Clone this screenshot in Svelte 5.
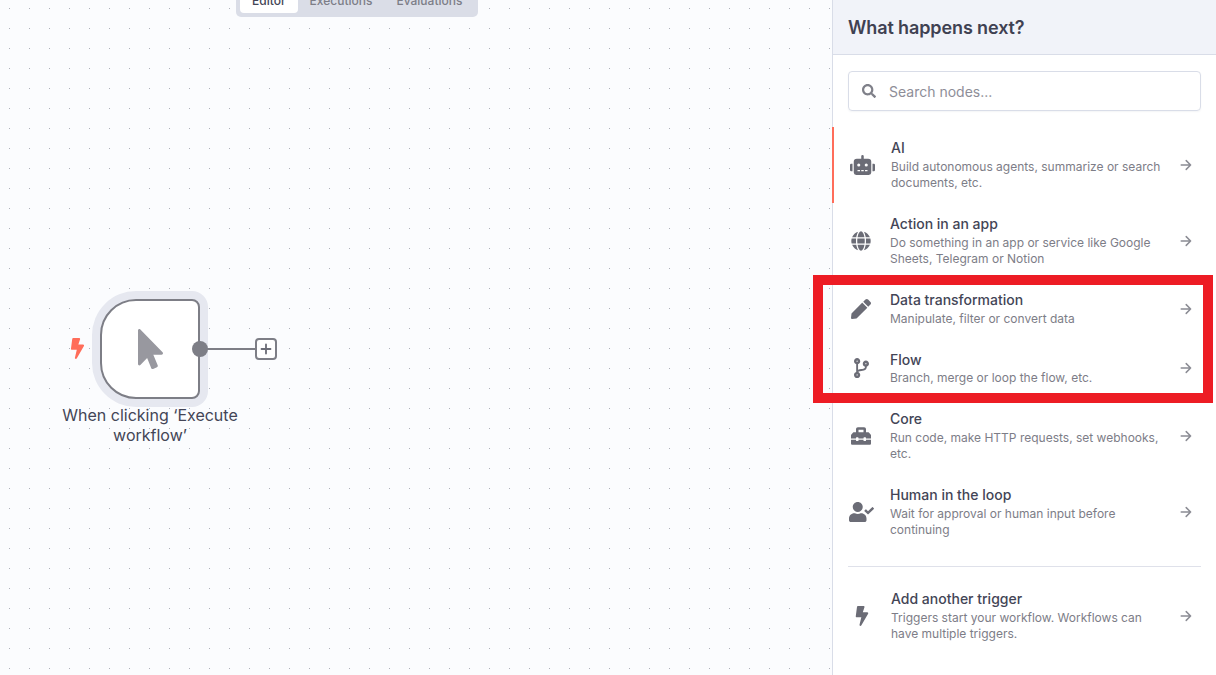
<script>
  const paths = {
    robot: { vb: '0 0 640 512', w: 25, d: 'M32,224H64V416H32A31.96166,31.96166,0,0,1,0,384V256A31.96166,31.96166,0,0,1,32,224Zm512-48V448a64.06328,64.06328,0,0,1-64,64H160a64.06328,64.06328,0,0,1-64-64V176a79.974,79.974,0,0,1,80-80H288V32a32,32,0,0,1,64,0V96H464A79.974,79.974,0,0,1,544,176ZM264,256a40,40,0,1,0-40,40A39.997,39.997,0,0,0,264,256Zm-8,128H192v32h64Zm96,0H288v32h64ZM456,256a40,40,0,1,0-40,40A39.997,39.997,0,0,0,456,256Zm-8,128H384v32h64ZM640,256V384a31.96166,31.96166,0,0,1-32,32H576V224h32A31.96166,31.96166,0,0,1,640,256Z' },
    globe: { vb: '0 0 496 512', w: 20, d: 'M336.5 160C322 70.7 287.8 8 248 8s-74 62.7-88.5 152h177zM152 256c0 22.2 1.2 43.5 3.3 64h185.3c2.1-20.5 3.3-41.8 3.3-64s-1.2-43.5-3.3-64H155.3c-2.1 20.5-3.3 41.8-3.3 64zm324.7-96c-28.6-67.9-86.5-120.4-158-141.6 24.4 33.8 41.2 84.7 50 141.6h108zM177.2 18.4C105.8 39.6 47.8 92.1 19.3 160h108c8.7-56.9 25.5-107.8 49.9-141.6zM487.4 192H372.7c2.1 21 3.3 42.5 3.3 64s-1.2 43-3.3 64h114.6c5.5-20.5 8.6-41.8 8.6-64s-3.1-43.5-8.5-64zM120 256c0-21.5 1.2-43 3.3-64H8.6C3.2 212.5 0 233.8 0 256s3.2 43.5 8.6 64h114.6c-2-21-3.2-42.5-3.2-64zm39.5 96c14.5 89.3 48.7 152 88.5 152s74-62.7 88.5-152h-177zm159.3 141.6c71.4-21.2 129.4-73.7 158-141.6h-108c-8.8 56.9-25.6 107.8-50 141.6zM19.3 352c28.6 67.9 86.5 120.4 158 141.6-24.4-33.8-41.2-84.7-50-141.6h-108z' },
    pen: { vb: '0 0 512 512', w: 20, d: 'M290.74 93.24l128.02 128.02-277.99 277.99-114.14 12.6C11.35 513.54-1.56 500.62.14 485.34l12.7-114.22 277.9-278.88zm207.2-19.06l-60.11-60.11c-18.75-18.75-49.16-18.75-67.91 0l-56.55 56.55 128.02 128.02 56.55-56.55c18.75-18.76 18.75-49.16 0-67.91z' },
    branch: { vb: '0 0 384 512', w: 15, d: 'M384 144c0-44.2-35.8-80-80-80s-80 35.8-80 80c0 36.4 24.3 67.1 57.5 76.8-.6 16.1-4.2 28.5-11 36.9-15.4 19.2-49.3 22.4-85.2 25.7-28.2 2.6-57.4 5.4-81.3 16.9v-144c32.5-10.2 56-40.5 56-76.3 0-44.2-35.8-80-80-80S0 35.8 0 80c0 35.8 23.5 66.1 56 76.3v199.3C23.5 365.9 0 396.2 0 432c0 44.2 35.8 80 80 80s80-35.8 80-80c0-34-21.2-63.1-51.2-74.6 3.1-5.2 7.8-9.8 14.9-13.4 16.2-8.2 40.4-10.4 66.1-12.8 42.2-3.9 90-8.4 118.2-43.4 14-17.4 21.1-39.8 21.6-67.9 31.6-10.8 54.4-40.7 54.4-75.9zM80 64c8.8 0 16 7.2 16 16s-7.2 16-16 16-16-7.2-16-16 7.2-16 16-16zm0 384c-8.8 0-16-7.2-16-16s7.2-16 16-16 16 7.2 16 16-7.2 16-16 16zm224-320c8.8 0 16 7.2 16 16s-7.2 16-16 16-16-7.2-16-16 7.2-16 16-16z' },
    toolbox: { vb: '0 0 512 512', w: 20, d: 'M502.63 214.63l-45.25-45.25c-6-6-14.14-9.37-22.63-9.37H384V80c0-26.51-21.49-48-48-48H176c-26.51 0-48 21.49-48 48v80H77.25c-8.49 0-16.62 3.37-22.63 9.37L9.37 214.63c-6 6-9.37 14.14-9.37 22.63V320h128v-16c0-8.84 7.16-16 16-16h32c8.84 0 16 7.16 16 16v16h128v-16c0-8.84 7.16-16 16-16h32c8.84 0 16 7.16 16 16v16h128v-82.75c0-8.48-3.37-16.62-9.37-22.62zM320 160H192V96h128v64zm64 208c0 8.84-7.16 16-16 16h-32c-8.84 0-16-7.16-16-16v-16H192v16c0 8.84-7.16 16-16 16h-32c-8.84 0-16-7.16-16-16v-16H0v96c0 17.67 14.33 32 32 32h448c17.67 0 32-14.33 32-32v-96H384v16z' },
    user: { vb: '0 0 640 512', w: 25, d: 'M224 256c70.7 0 128-57.3 128-128S294.7 0 224 0 96 57.3 96 128s57.3 128 128 128zm89.6 32h-16.7c-22.2 10.2-46.9 16-72.9 16s-50.6-5.8-72.9-16h-16.7C60.2 288 0 348.2 0 422.4V464c0 26.5 21.5 48 48 48h352c26.5 0 48-21.5 48-48v-41.6c0-74.2-60.2-134.4-134.4-134.4zm323-128.4l-27.8-28.1c-4.6-4.7-12.1-4.7-16.8-.1l-104.8 104-45.5-45.8c-4.6-4.7-12.1-4.7-16.8-.1l-28.1 27.9c-4.7 4.6-4.7 12.1-.1 16.8l81.7 82.3c4.6 4.7 12.1 4.7 16.8.1l141.3-140.2c4.6-4.7 4.7-12.2.1-16.8z' },
    bolt: { vb: '0 0 320 512', w: 14, d: 'M296 160H180.6l42.6-129.8C227.2 15 215.7 0 200 0H56C44 0 33.8 8.9 32.2 20.8l-32 240C-1.7 275.2 9.5 288 24 288h118.7L96.6 482.5c-3.6 15.2 8 29.5 23.3 29.5 8.4 0 16.4-4.4 20.8-12l176-304c9.3-15.9-2.2-36-20.7-36z' }
  };
  const search = 'M505 442.7L405.3 343c-4.5-4.5-10.6-7-17-7H372c27.6-35.3 44-79.7 44-128C416 93.1 322.9 0 208 0S0 93.1 0 208s93.1 208 208 208c48.3 0 92.7-16.4 128-44v16.3c0 6.4 2.5 12.5 7 17l99.7 99.7c9.4 9.4 24.6 9.4 33.9 0l28.3-28.3c9.4-9.4 9.4-24.6.1-34zM208 336c-70.7 0-128-57.2-128-128 0-70.7 57.2-128 128-128 70.7 0 128 57.2 128 128 0 70.7-57.2 128-128 128z';
  const pointer = 'M302.189 329.126H196.105l55.831 135.993c3.889 9.428-.555 19.999-9.444 23.999l-49.165 21.427c-9.165 4-19.443-.571-23.332-9.714l-53.053-129.136-86.664 89.138C18.729 472.71 0 463.554 0 447.977V18.299C0 1.899 19.921-6.096 30.277 5.443l284.412 292.542c11.472 11.179 3.007 31.141-12.5 31.141z';

  const main = [
    { icon: 'robot', title: 'AI', desc: 'Build autonomous agents, summarize or search documents, etc.', accent: true },
    { icon: 'globe', title: 'Action in an app', desc: 'Do something in an app or service like Google Sheets, Telegram or Notion' },
    { icon: 'pen', title: 'Data transformation', desc: 'Manipulate, filter or convert data' },
    { icon: 'branch', title: 'Flow', desc: 'Branch, merge or loop the flow, etc.' },
    { icon: 'toolbox', title: 'Core', desc: 'Run code, make HTTP requests, set webhooks, etc.' },
    { icon: 'user', title: 'Human in the loop', desc: 'Wait for approval or human input before continuing' }
  ];
  const trigger = { icon: 'bolt', title: 'Add another trigger', desc: 'Triggers start your workflow. Workflows can have multiple triggers.', inset: true };
</script>

{#snippet row(item)}
  <div class="item" class:accent={item.accent} class:inset={item.accent || item.inset}>
    <span class="slot">
      <svg viewBox={paths[item.icon].vb} width={paths[item.icon].w} height="20" fill="currentColor"><path d={paths[item.icon].d} /></svg>
    </span>
    <div class="copy">
      <div class="title">{item.title}</div>
      <div class="desc">{item.desc}</div>
    </div>
    <svg class="arrow" viewBox="0 0 12 12" width="12" height="12" fill="none" stroke="currentColor" stroke-width="1.5" stroke-linecap="round" stroke-linejoin="round"><path d="M1.2 6h9.4M6.2 1.6 10.6 6l-4.4 4.4" /></svg>
  </div>
{/snippet}

<div class="page">
  <main class="canvas">
    <div class="tabs">
      <span class="tab active">Editor</span>
      <span class="tab">Executions</span>
      <span class="tab">Evaluations</span>
    </div>

    <svg class="flash" viewBox="0 0 320 512" width="15" height="21" fill="#ff6d5a"><path d="M296 160H180.6l42.6-129.8C227.2 15 215.7 0 200 0H56C44 0 33.8 8.9 32.2 20.8l-32 240C-1.7 275.2 9.5 288 24 288h118.7L96.6 482.5c-3.6 15.2 8 29.5 23.3 29.5 8.4 0 16.4-4.4 20.8-12l176-304c9.3-15.9-2.2-36-20.7-36z" /></svg>

    <div class="node">
      <svg viewBox="0 0 320 512" width="25" height="40" fill="#98989f"><path d={pointer} /></svg>
      <span class="handle"></span>
    </div>
    <span class="wire"></span>
    <span class="plus">
      <svg viewBox="0 0 12 12" width="12" height="12" fill="none" stroke="#6b6c76" stroke-width="1.8" stroke-linecap="round"><path d="M6 1.5v9M1.5 6h9" /></svg>
    </span>
    <div class="label">When clicking ‘Execute workflow’</div>
  </main>

  <aside class="panel">
    <header class="head">What happens next?</header>
    <div class="search-wrap">
      <div class="search">
        <svg viewBox="0 0 512 512" width="14" height="14" fill="#7f8089"><path d={search} /></svg>
        <span>Search nodes...</span>
      </div>
    </div>
    <div class="list">
      {#each main as item}
        {@render row(item)}
      {/each}
    </div>
    <div class="rule"></div>
    {@render row(trigger)}
  </aside>

  <div class="highlight"></div>
</div>

<style>
  :global(body) {
    margin: 0;
    font-family: Inter, "Liberation Sans", sans-serif;
  }
  .page {
    display: flex;
    width: 1216px;
    height: 675px;
    overflow: hidden;
    position: relative;
    background: #fff;
  }
  .canvas {
    position: relative;
    flex: 1;
    background-color: #fbfcfe;
    background-image: radial-gradient(circle at 0.5px 0.5px, #aeb1ba 0.5px, transparent 0.5px);
    background-size: 20px 20px;
    background-position: 9px 8px;
  }
  .tabs {
    position: absolute;
    left: 236px;
    top: -16px;
    height: 33px;
    box-sizing: border-box;
    padding: 4px;
    display: flex;
    background: #dadde7;
    border-radius: 0 0 5px 5px;
    font-size: 12px;
    line-height: 25px;
    color: #7d7d87;
    font-weight: 500;
  }
  .tab {
    padding: 0 12px;
    border-radius: 4px;
  }
  .tab.active {
    background: #fff;
    color: #434556;
  }
  .flash {
    position: absolute;
    left: 70px;
    top: 338px;
  }
  .node {
    position: absolute;
    left: 100px;
    top: 299px;
    width: 100px;
    height: 100px;
    box-sizing: border-box;
    background: #fff;
    border: 2px solid #7d7e86;
    border-radius: 36px 8px 8px 36px;
    box-shadow: 0 0 0 8px #e6e8f0;
    display: flex;
    align-items: center;
    justify-content: center;
  }
  .handle {
    position: absolute;
    right: -10px;
    top: 40px;
    width: 16px;
    height: 16px;
    border-radius: 50%;
    background: #7d7e86;
  }
  .wire {
    position: absolute;
    left: 207px;
    top: 348px;
    width: 48px;
    height: 2px;
    background: #7d7e86;
  }
  .plus {
    position: absolute;
    left: 255px;
    top: 338px;
    width: 22px;
    height: 22px;
    box-sizing: border-box;
    background: #fff;
    border: 2px solid #7d7e86;
    border-radius: 4px;
    display: flex;
    align-items: center;
    justify-content: center;
  }
  .label {
    position: absolute;
    left: 50px;
    top: 405px;
    width: 200px;
    text-align: center;
    font-size: 16px;
    line-height: 20px;
    font-weight: 400;
    color: #434556;
  }
  .panel {
    width: 384px;
    box-sizing: border-box;
    border-left: 1px solid #d9dde8;
    background: #fff;
    flex: none;
  }
  .head {
    height: 55px;
    box-sizing: border-box;
    display: flex;
    align-items: center;
    padding-left: 15px;
    background: #f1f3f9;
    border-bottom: 1px solid #d9dde8;
    font-size: 18px;
    font-weight: 600;
    letter-spacing: -0.11px;
    color: #3f4152;
  }
  .search-wrap {
    padding: 16px 15px;
  }
  .search {
    height: 40px;
    box-sizing: border-box;
    display: flex;
    align-items: center;
    gap: 13px;
    padding-left: 13px;
    border: 1px solid #d9dde8;
    border-radius: 4px;
    box-shadow: 0 1px 2px rgba(70, 80, 110, 0.06);
    font-size: 14px;
    color: #8e8e98;
  }
  .item {
    display: flex;
    align-items: center;
    gap: 16px;
    padding: 11.25px 24px 11.75px 15px;
    box-sizing: border-box;
  }
  .item.inset {
    margin-left: -1px;
    border-left: 2px solid transparent;
  }
  .item.accent {
    border-left-color: #ff6d5a;
  }
  .slot {
    flex: none;
    width: 26px;
    display: flex;
    justify-content: center;
    color: #6b6c76;
    margin-top: 0.75px;
  }
  .copy {
    flex: 1;
    min-width: 0;
  }
  .title {
    font-size: 14px;
    line-height: 20px;
    margin-bottom: 0.75px;
    font-weight: 500;
    color: #434556;
  }
  .desc {
    font-size: 12px;
    line-height: 16px;
    color: #7d7d87;
  }
  .arrow {
    flex: none;
    color: #8b8c94;
    margin-top: 0.75px;
  }
  .rule {
    margin: 16.5px 15px 10.75px;
    border-top: 1px solid #dfe1ea;
  }
  .highlight {
    position: absolute;
    left: 813px;
    top: 275px;
    width: 400px;
    height: 128px;
    box-sizing: border-box;
    border: 10px solid #ed1c24;
    pointer-events: none;
  }
</style>
